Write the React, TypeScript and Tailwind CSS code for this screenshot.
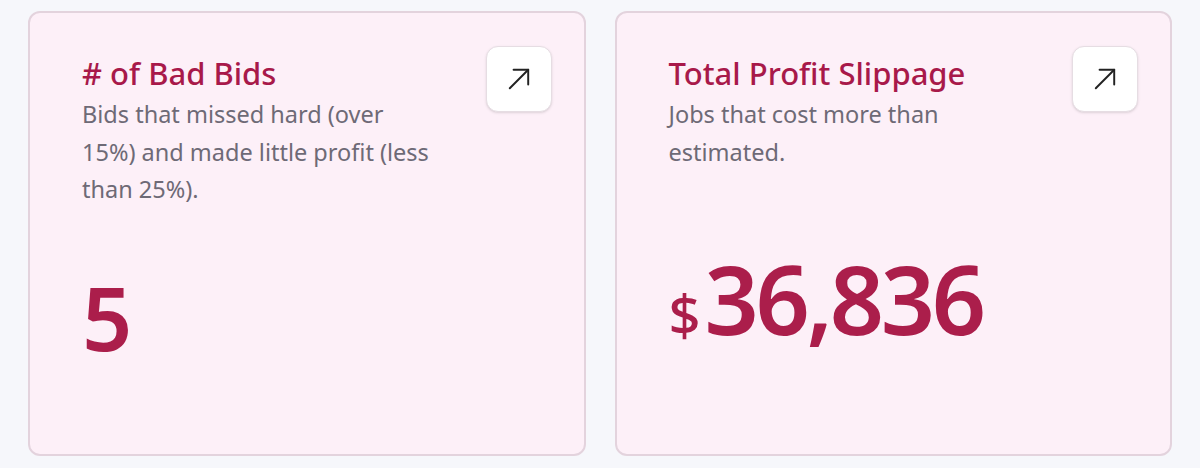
type Metric = {
    title: string;
    description: string;
    prefix?: string;
    value: string;
};

const metrics: Metric[] = [
    {
        title: '# of Bad Bids',
        description:
            'Bids that missed hard (over 15%) and made little profit (less than 25%).',
        value: '5',
    },
    {
        title: 'Total Profit Slippage',
        description: 'Jobs that cost more than estimated.',
        prefix: '$',
        value: '36,836',
    },
];

function ArrowIcon() {
    return (
        <svg
            viewBox="0 0 24 24"
            className="h-[26px] w-[26px]"
            fill="none"
            stroke="#222"
            strokeWidth={1.8}
            strokeLinecap="round"
            strokeLinejoin="round"
        >
            <path d="M3.5 20.5 20.5 3.5" />
            <path d="M7 3.5h13.5V17" />
        </svg>
    );
}

function MetricCard({ metric }: { metric: Metric }) {
    return (
        <div className="flex h-[445px] flex-col rounded-[12px] border-2 border-[#e3d3dd] bg-[#fdf0f8] pt-[33px] pr-[32px] pl-[52px]">
            <div className="flex items-start justify-between">
                <div className="max-w-[356px] pt-[8px]">
                    <h2 className="text-[31px] leading-[38px] font-medium text-[#a8194a]">
                        {metric.title}
                    </h2>
                    <p className="mt-[4px] text-[23.5px] leading-[37.5px] text-[#6e6a76]">
                        {metric.description}
                    </p>
                </div>
                <button
                    type="button"
                    className="flex h-[66px] w-[66px] shrink-0 items-center justify-center rounded-[12px] border border-[#e6dde3] bg-white shadow-sm"
                >
                    <ArrowIcon />
                </button>
            </div>
            <div className="flex flex-1 items-center pb-[28px]">
                <p className="flex items-baseline font-semibold text-[#ab1e4b]">
                    {metric.prefix && (
                        <span className="mr-[4px] text-[56px] leading-none font-medium">
                            {metric.prefix}
                        </span>
                    )}
                    <span
                        className={
                            metric.prefix
                                ? 'text-[95px] leading-none tracking-[-0.035em]'
                                : 'text-[88px] leading-none'
                        }
                    >
                        {metric.value}
                    </span>
                </p>
            </div>
        </div>
    );
}

export default function App() {
    return (
        <div
            className="h-[468px] w-[1200px] bg-[#f6f7fb] px-[28px] pt-[11px]"
            style={{ fontFamily: '"Noto Sans", "Open Sans", sans-serif' }}
        >
            <div className="grid grid-cols-2 gap-[29px]">
                {metrics.map((m) => (
                    <MetricCard key={m.title} metric={m} />
                ))}
            </div>
        </div>
    );
}
